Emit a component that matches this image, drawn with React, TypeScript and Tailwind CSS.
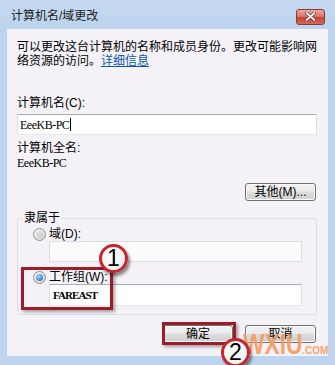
import React from 'react'

const ui = { fontFamily: '"Liberation Sans", "Noto Sans CJK SC", sans-serif' }
const serif = { fontFamily: '"Liberation Serif", "Noto Sans CJK SC", serif' }

function Radio({ checked }: { checked?: boolean }) {
  return (
    <span className="w-[13px] h-[13px] rounded-full border border-[#8f8f8f] bg-gradient-to-br from-[#f4f4f4] to-[#d6d6d6] flex items-center justify-center shrink-0">
      {checked ? (
        <span className="w-[7px] h-[7px] rounded-full bg-[radial-gradient(circle_at_35%_35%,#9fd6ff,#1b5fa6)]" />
      ) : (
        <span className="w-[7px] h-[7px] rounded-full bg-gradient-to-br from-[#e8e8e8] to-[#c8c8c8]" />
      )}
    </span>
  )
}

function Button({ label, w }: { label: string; w: string }) {
  return (
    <div
      className={`${w} h-[18px] rounded-[3px] border border-[#707070] bg-[linear-gradient(#f2f2f2_0%,#ebebeb_45%,#dddddd_50%,#cfcfcf_100%)] flex items-center justify-center text-[12px] leading-[14px] text-black shadow-[inset_0_0_0_1px_#fcfcfc]`}
    >
      {label}
    </div>
  )
}

function Marker({ n, left, top }: { n: string; left: string; top: string }) {
  return (
    <div
      className={`absolute ${left} ${top} w-[29px] h-[29px] rounded-full border-[3px] border-[#c4252f] bg-[radial-gradient(circle_at_40%_35%,#ffffff,#e9e9e9)] shadow-[2px_3px_3px_rgba(0,0,0,0.45)] flex items-center justify-center text-[23px] leading-none text-black`}
      style={ui}
    >
      {n}
    </div>
  )
}

export default function App() {
  return (
    <div
      className="relative w-[335px] h-[365px] overflow-hidden flex flex-col bg-[#bed4ee] text-black"
      style={ui}
    >
      {/* title bar */}
      <div className="h-[29px] shrink-0 flex items-center pl-[11px] pr-[10px] bg-[linear-gradient(#c6daf1,#bcd3ee)]">
        <span className="text-[12px] leading-[14px] text-[#1e1e1e] mt-[2px]">计算机名/域更改</span>
        <div className="ml-auto mt-[4px] w-[29px] h-[16px] rounded-[3px] border border-[#8b3b36] bg-[linear-gradient(#e8a89c_0%,#d97a6c_45%,#c64234_55%,#d4685a_100%)] flex items-center justify-center">
          <svg width="11" height="9" viewBox="0 0 11 9">
            <path d="M1.5 1 L9.5 8 M9.5 1 L1.5 8" stroke="#5a2420" strokeWidth="3" strokeLinecap="round" />
            <path d="M1.5 1 L9.5 8 M9.5 1 L1.5 8" stroke="#ffffff" strokeWidth="1.8" strokeLinecap="round" />
          </svg>
        </div>
      </div>

      {/* client area */}
      <div className="mx-[7px] mb-[9px] flex-1 bg-[#f4f2f7] flex flex-col pl-[10px] pr-[11px] pt-[11px] text-[12px]">
        <p className="leading-[14px]">
          可以更改这台计算机的名称和成员身份。更改可能影响网络资源的访问。
          <span className="text-[#0b57a8] underline">详细信息</span>
        </p>

        <div className="mt-[28px] leading-[14px]">计算机名(C):</div>
        <div className="mt-[4px] h-[21px] bg-white border border-[#dbdfe6] border-t-[#abadb3] border-b-[#e3e9ef] flex items-center pl-[2px]">
          <span className="text-[12px] tracking-[-0.5px] leading-[12px]" style={serif}>EeeKB-PC</span>
          <span className="w-px h-[13px] bg-black ml-[1px]" />
        </div>

        <div className="mt-[6px] leading-[14px]">计算机全名:</div>
        <div className="mt-[2px] text-[12px] tracking-[-0.5px] leading-[12px]" style={serif}>EeeKB-PC</div>

        <div className="mt-[14px] flex justify-end pr-[1px]">
          <Button label="其他(M)..." w="w-[71px]" />
        </div>

        <fieldset className="mt-[10px] border border-[#d5dfe5] rounded-[3px] pb-[8px]">
          <legend className="ml-[5px] px-[1px] leading-[14px]">隶属于</legend>
          <div className="mt-[3px] ml-[15px] flex items-center gap-[3px] h-[13px] leading-[13px]">
            <Radio />
            <span>域(D):</span>
          </div>
          <div className="ml-[31px] w-[253px] h-[21px] bg-[#fbfbfb] border border-[#d9dde3]" />

          <div className="mt-[8px] ml-[15px] flex items-center gap-[3px] h-[14px] leading-[14px]">
            <Radio checked />
            <span>工作组(W):</span>
          </div>
          <div className="ml-[31px] w-[253px] h-[22px] bg-white border border-[#dbdfe6] border-t-[#abadb3] border-b-[#e3e9ef] flex items-center pl-[3px]">
            <span className="text-[11px] font-bold tracking-[-0.9px] leading-[12px]" style={serif}>FAREAST</span>
          </div>
        </fieldset>

        <div className="mt-[10px] flex justify-end gap-[12px] pr-[1px]">
          <Button label="确定" w="w-[70px]" />
          <Button label="取消" w="w-[71px]" />
        </div>
      </div>

      {/* annotations */}
      <div className="absolute left-[21px] top-[267px] w-[92px] h-[43px] border-[3px] border-[#9b1d29] shadow-[2px_2px_3px_rgba(0,0,0,0.35)]" />
      <div className="absolute left-[162px] top-[322px] w-[74px] h-[23px] border-[3px] border-[#9b1d29] shadow-[2px_2px_3px_rgba(0,0,0,0.35)]" />
      <Marker n="1" left="left-[99px]" top="top-[244px]" />

      <div className="absolute left-[243px] top-[333px] flex items-baseline font-bold text-[#f29c62] opacity-90" style={ui}>
        <span className="text-[30px] leading-[22px] inline-block scale-x-[0.76] origin-left">WXIU</span>
        <span className="text-[10px] leading-[10px] -ml-[19px]">.COM</span>
      </div>
      <Marker n="2" left="left-[221px]" top="top-[338px]" />
    </div>
  )
}
